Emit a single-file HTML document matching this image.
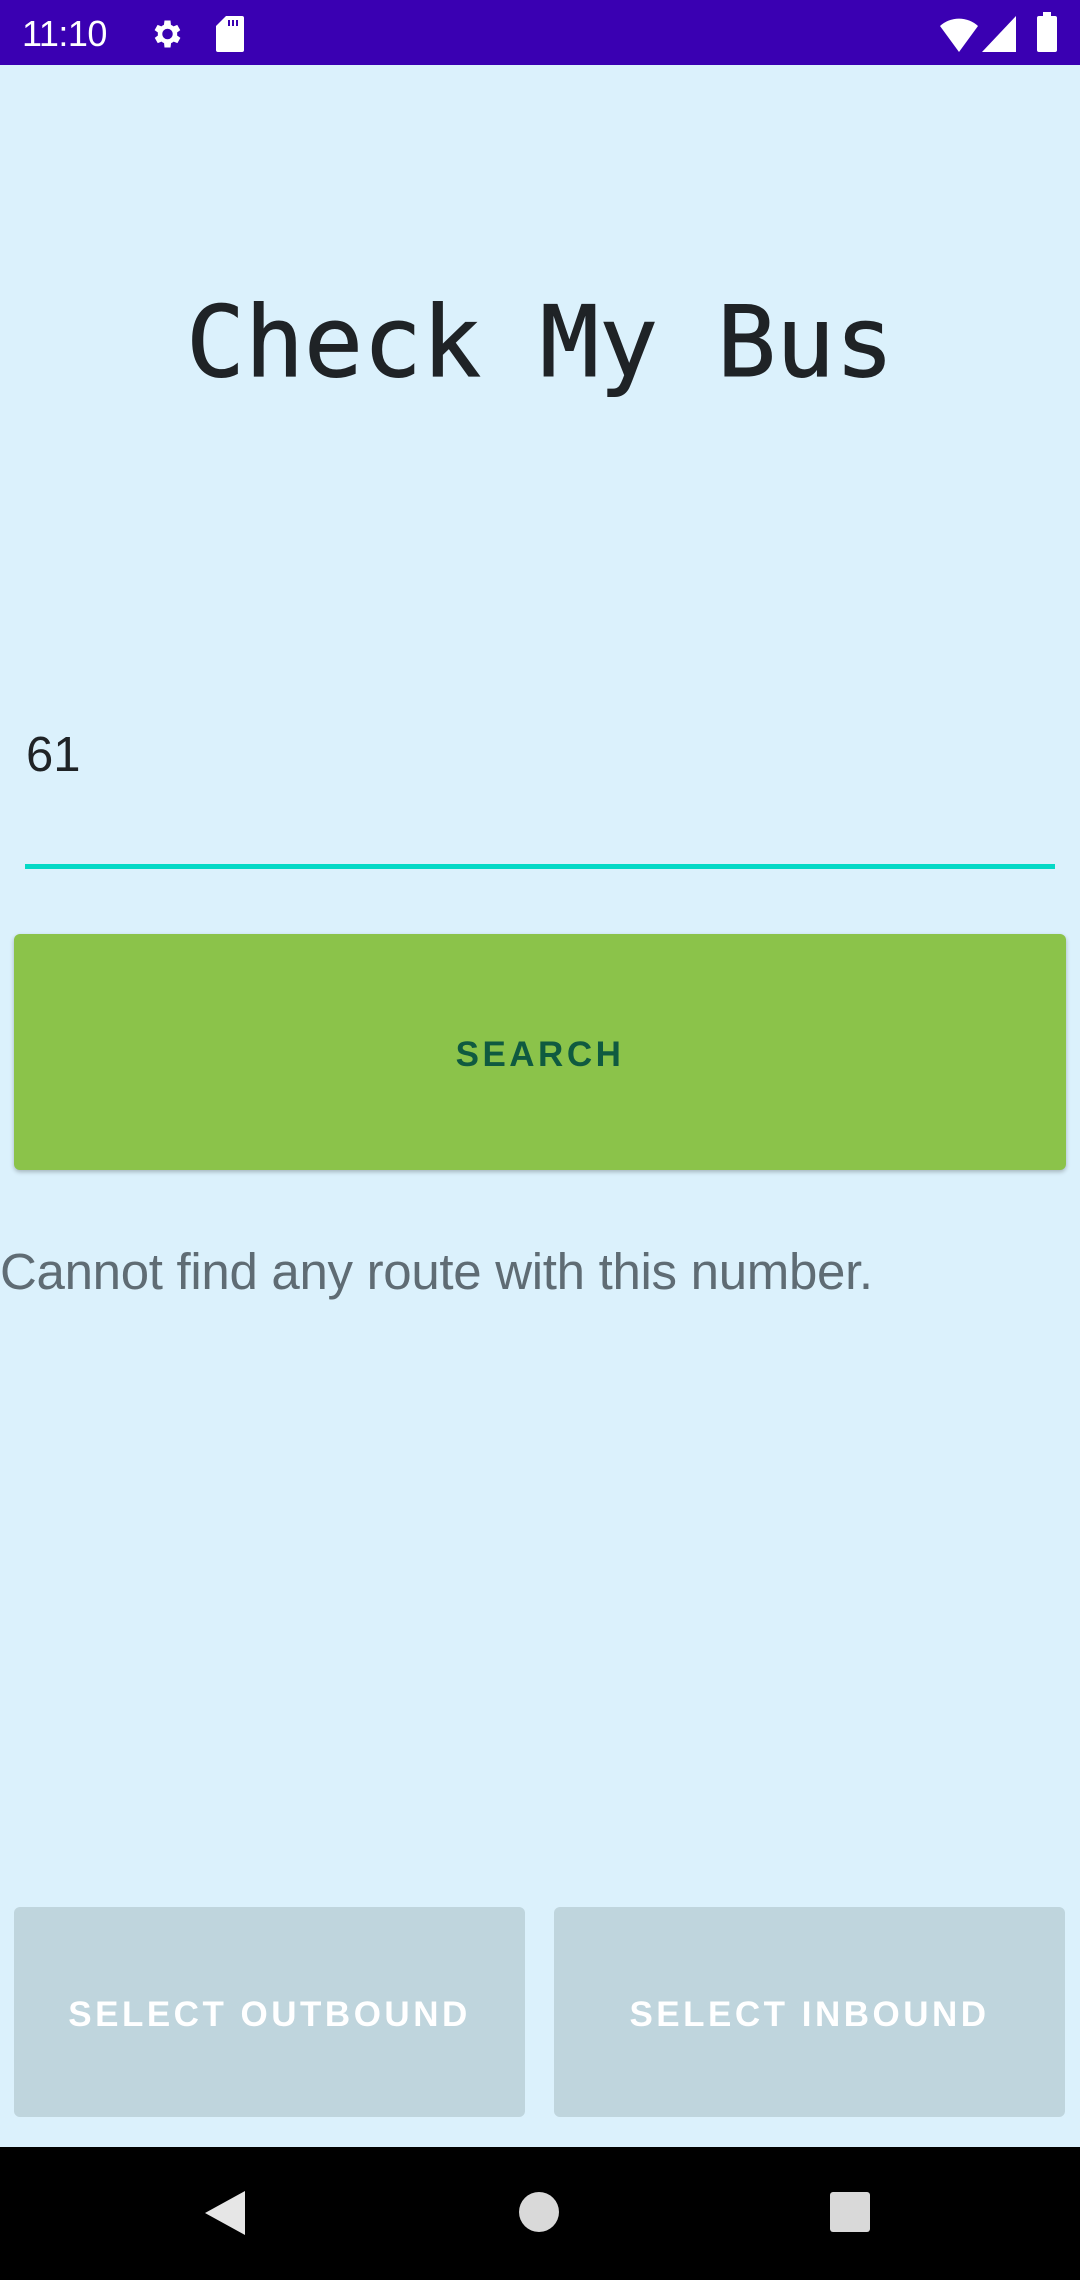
<!DOCTYPE html>
<html><head><meta charset="utf-8"><style>
*{margin:0;padding:0;box-sizing:border-box}
body{width:1080px;height:2280px;background:#dbf1fc;position:relative;overflow:hidden;font-family:"Liberation Sans",sans-serif}
.sb{position:absolute;left:0;top:0;width:1080px;height:65px;background:#3a00b2;color:#fff}
.time{position:absolute;left:22px;top:13px;font-size:36px;letter-spacing:-0.5px}
.title{position:absolute;left:0;width:1080px;top:290px;text-align:center;font-family:"DejaVu Sans Mono","Liberation Mono",monospace;font-size:98px;color:#1f2326;line-height:1.1;-webkit-text-stroke:1px #1f2326}
.inp{position:absolute;left:26px;top:727px;font-size:49px;color:#1f2326}
.line{position:absolute;left:25px;top:864px;width:1030px;height:5px;background:#04d9c6}
.btn{position:absolute;border-radius:6px;display:flex;align-items:center;justify-content:center;font-size:35px;letter-spacing:3.5px;font-weight:bold}
.search{left:14px;top:934px;width:1052px;height:236px;background:#8bc34a;color:#0f5a40;box-shadow:0 2px 4px rgba(0,0,0,.25);padding-top:6px}
.msg{position:absolute;left:0;top:1242px;font-size:51px;color:#5f6c74;letter-spacing:-0.3px}
.gb{background:#bfd5dd;color:#fff;top:1907px;height:210px;width:511px;padding-top:6px}
.nav{position:absolute;left:0;top:2147px;width:1080px;height:133px;background:#000}
</style></head><body>
<div class="sb">
<div class="time">11:10</div>
<svg style="position:absolute;left:148px;top:16px" width="36" height="36" viewBox="0 0 24 24"><path fill="#fff" d="M19.4 13a7.5 7.5 0 000-2l2.1-1.6-2-3.5-2.5 1a7 7 0 00-1.7-1L15 3h-4l-.4 2.9a7 7 0 00-1.7 1l-2.5-1-2 3.5L6.6 11a7.5 7.5 0 000 2l-2.1 1.6 2 3.5 2.5-1a7 7 0 001.7 1L11 21h4l.4-2.9a7 7 0 001.7-1l2.5 1 2-3.5zM13 15.5a3.5 3.5 0 110-7 3.5 3.5 0 010 7z"/></svg>
<svg style="position:absolute;left:216px;top:16px" width="28" height="36" viewBox="0 0 14 18"><path fill="#fff" d="M5 0h8a1 1 0 011 1v16a1 1 0 01-1 1H1a1 1 0 01-1-1V5z"/><path fill="#3a00b2" d="M6 2h1v3H6zM8 2h1v3H8zM10 2h1v3h-1z"/></svg>
<svg style="position:absolute;left:938px;top:16px" width="42" height="36" viewBox="0 0 42 36"><path fill="#fff" d="M2 10a28 28 0 0138 0L21 36z"/></svg>
<svg style="position:absolute;left:982px;top:16px" width="36" height="36" viewBox="0 0 36 36"><path fill="#fff" d="M34 0v36H0z"/></svg>
<div style="position:absolute;left:1037px;top:16px;width:20px;height:36px;background:#fff;border-radius:2px"></div>
<div style="position:absolute;left:1043px;top:12px;width:8px;height:5px;background:#fff"></div>
</div>
<div class="title">Check My Bus</div>
<div class="inp">61</div>
<div class="line"></div>
<div class="btn search">SEARCH</div>
<div class="msg">Cannot find any route with this number.</div>
<div class="btn gb" style="left:14px">SELECT OUTBOUND</div>
<div class="btn gb" style="left:554px">SELECT INBOUND</div>
<div class="nav">
<svg style="position:absolute;left:203px;top:42px" width="44" height="48" viewBox="0 0 44 48"><path fill="#fff" d="M42 2v44L2 24z" opacity=".9"/></svg>
<div style="position:absolute;left:519px;top:45px;width:40px;height:40px;border-radius:50%;background:#d9d9d9"></div>
<div style="position:absolute;left:830px;top:45px;width:40px;height:40px;border-radius:3px;background:#d9d9d9"></div>
</div>
</body></html>
